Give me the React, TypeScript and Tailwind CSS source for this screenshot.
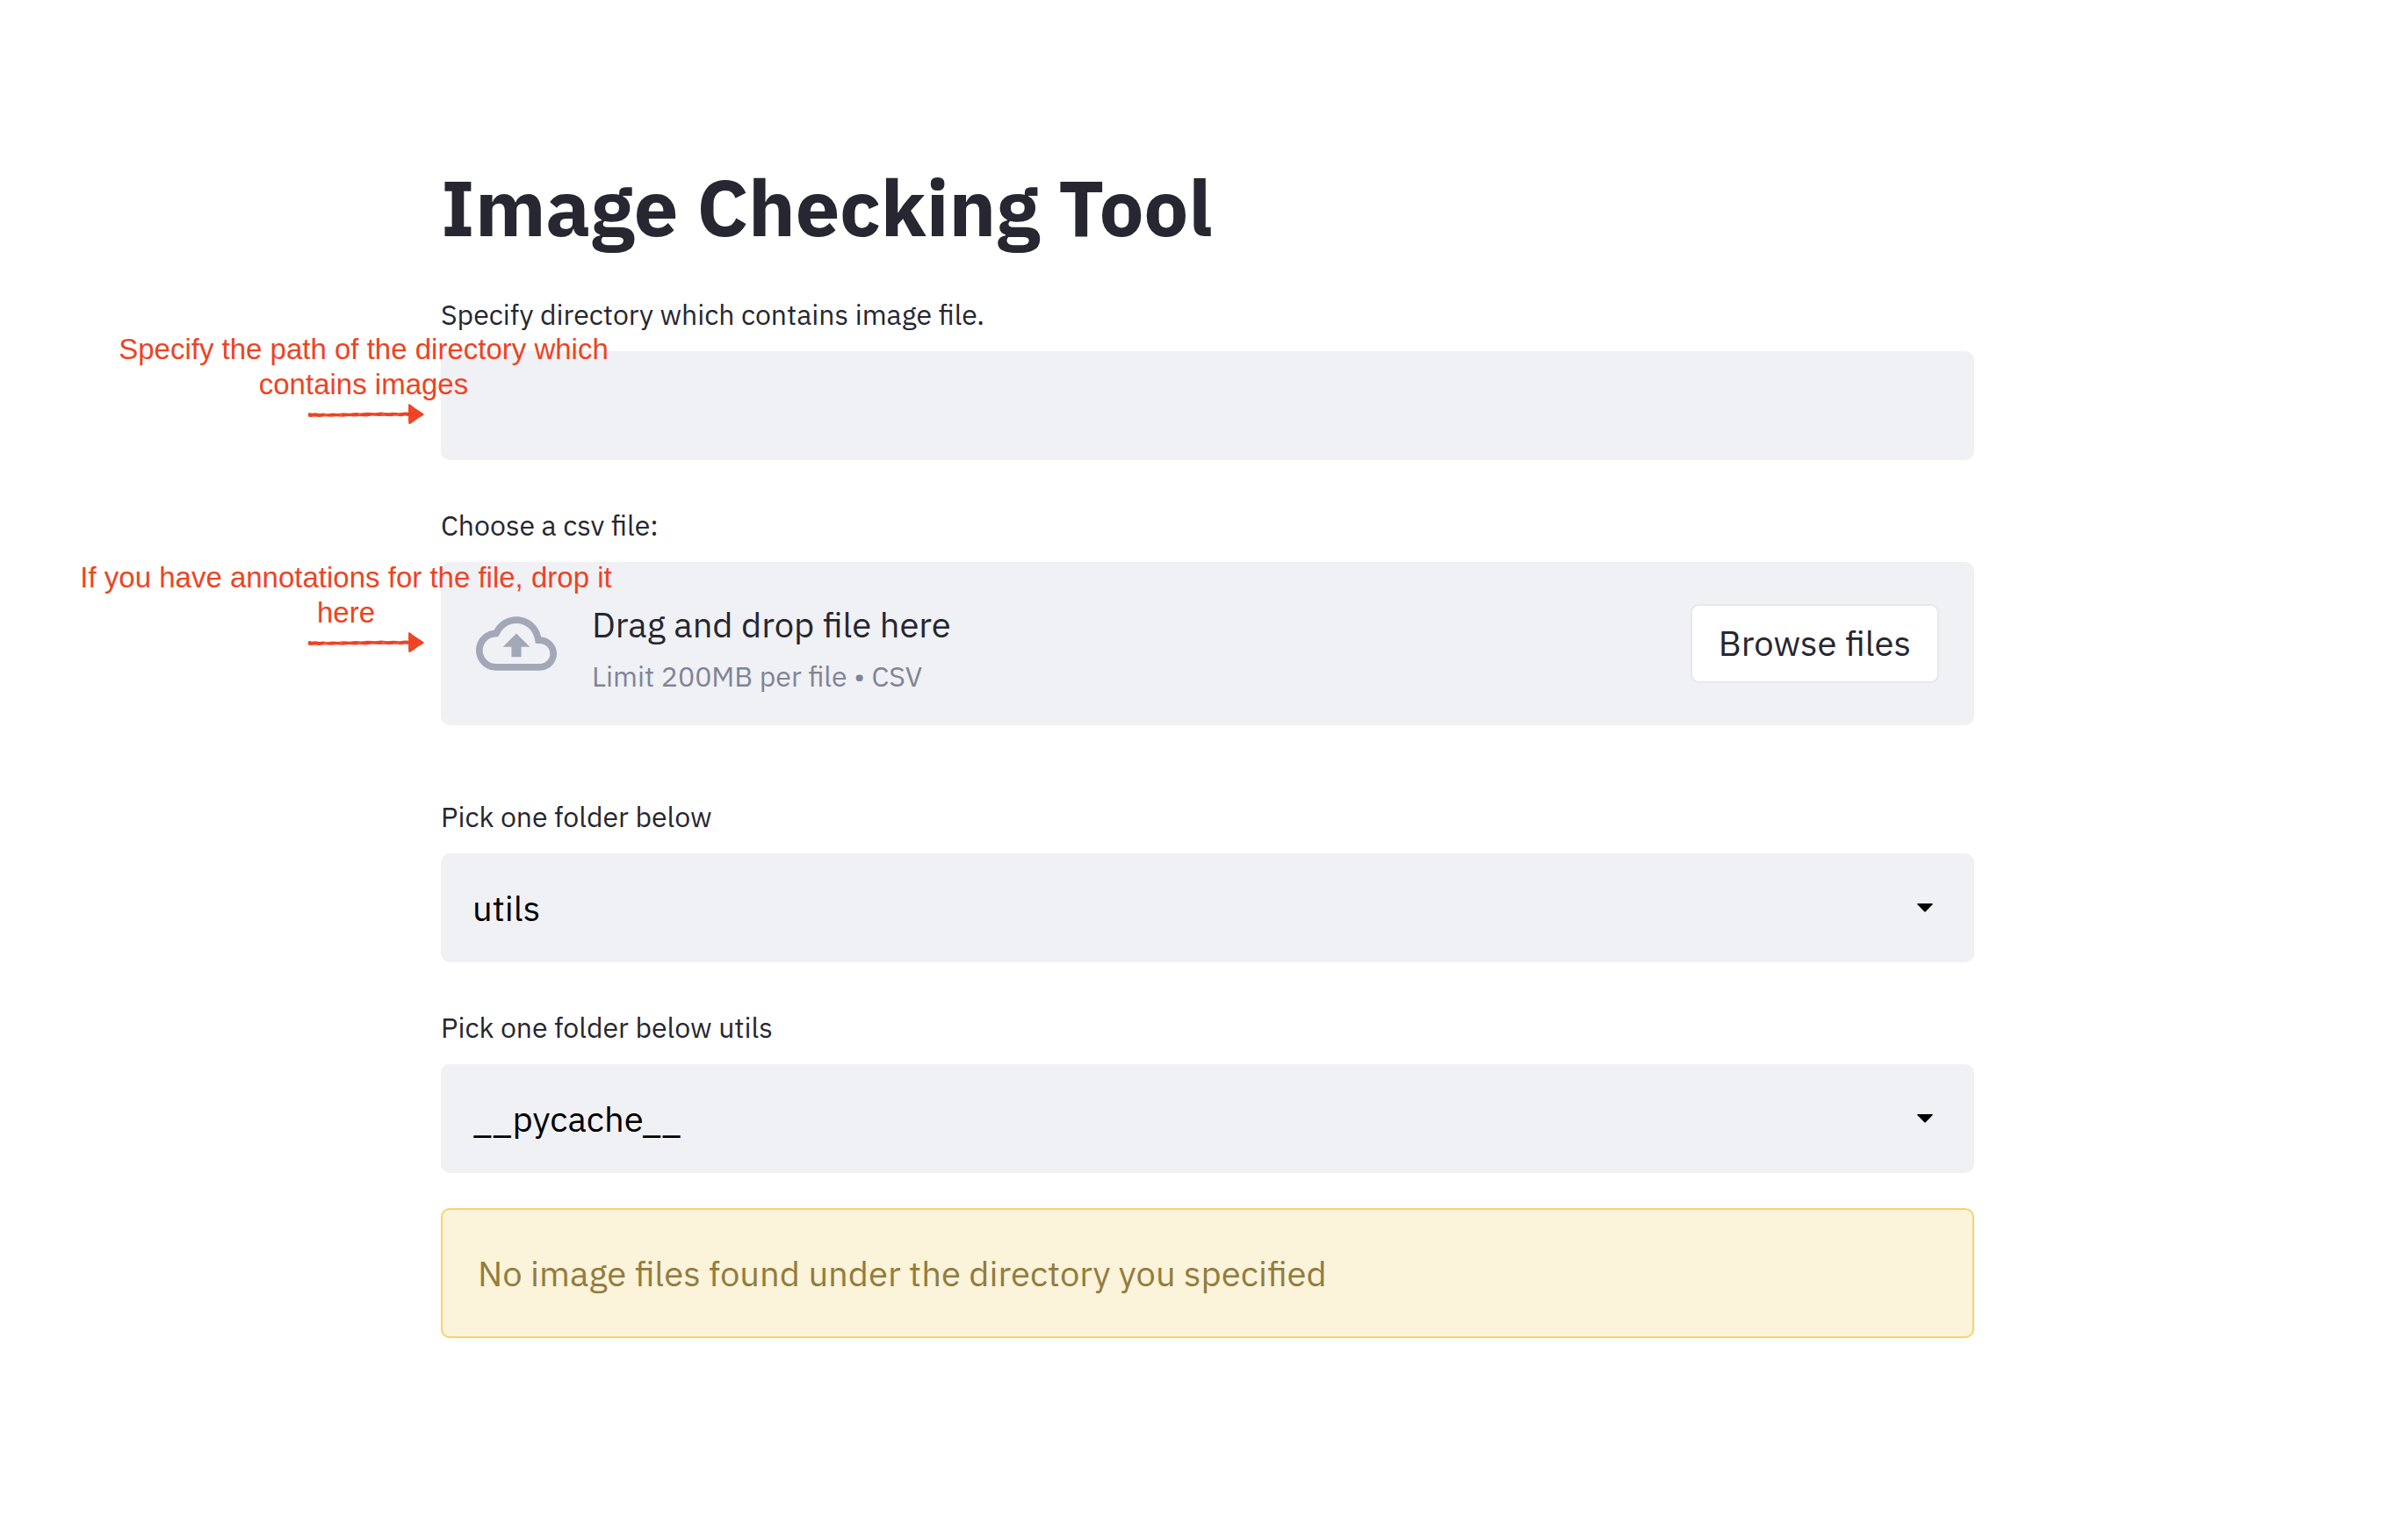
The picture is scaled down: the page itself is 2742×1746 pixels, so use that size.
import { useRef, useState, type ReactNode } from "react";

function Arrow({ className }: { className: string }) {
  return (
    <svg viewBox="0 0 132 24" className={`h-6 w-[132px] ${className}`} fill="#ee4323" aria-hidden="true">
      <path d="M0 10.4 L2 10 L4 10.8 L8 10.2 L13 11 L17 10.6 L22 11.2 L28 10.4 L34 10.9 L40 10.2 L47 10.7 L54 9.9 L60 10.5 L68 9.8 L76 10.3 L83 9.6 L90 10.2 L97 9.7 L104 10.2 L110 9.6 L115 9.8 L115 14 L110 13.4 L105 14.2 L99 13.6 L93 14.3 L87 13.7 L80 14.1 L73 13.6 L66 14.4 L59 14 L53 14.6 L46 14.1 L39 14.8 L32 14.2 L26 14.8 L19 14.2 L13 15 L7 14.4 L3 15 L0 14.6 Z" />
      <path d="M114.2 0.6 Q114.6 -0.4 115.8 0.5 L121 4.4 L124.5 6.8 L131 11 Q132.4 12 131 13 L125 16.6 L121 19.6 L116.2 22.8 Q114.4 23.6 114.3 22 L114 17 L114.3 12 L114 6 Z" />
      <path
        d="M116.6 4.5 l0.8 1 M118.5 8 l0.8 -0.6 M116.5 17.5 l1 -0.8 M120.5 15.5 l0.8 -0.6 M125 12.8 l1 0.2 M18 12.2 l3 0.3 M36 12.6 l2.4 -0.3 M57 12.2 l2.6 0.2 M84 11.9 l3 -0.2 M101 12 l2.4 0.2"
        stroke="#ffffff"
        strokeOpacity="0.4"
        strokeWidth="0.7"
        fill="none"
      />
    </svg>
  );
}

function Note({ className, arrowClass, children }: { className: string; arrowClass: string; children: ReactNode }) {
  return (
    <div
      className={`pointer-events-none absolute flex flex-col items-center text-center font-['Liberation_Sans',Arial,sans-serif] text-[33px] leading-10 text-[#ee4323] ${className}`}
    >
      <p>{children}</p>
      <Arrow className={arrowClass} />
    </div>
  );
}

function Label({ htmlFor, children }: { htmlFor: string; children: ReactNode }) {
  return (
    <label htmlFor={htmlFor} className="text-[32px] leading-[52px]">
      {children}
    </label>
  );
}

function Picker({ id, label, options }: { id: string; label: string; options: string[] }) {
  return (
    <div className="flex flex-col gap-4">
      <Label htmlFor={id}>{label}</Label>
      <div className="grid items-center">
        <select
          id={id}
          className="col-start-1 row-start-1 h-[124px] w-full appearance-none rounded-[10px] bg-[#f0f1f5] px-9 text-[40px] text-black"
        >
          {options.map((option) => (
            <option key={option}>{option}</option>
          ))}
        </select>
        <svg
          viewBox="0 0 18 10"
          className="pointer-events-none col-start-1 row-start-1 mr-[47px] h-2.5 w-[18px] justify-self-end"
          aria-hidden="true"
        >
          <path d="M0.8 0 H17.2 Q18.4 0.3 17.5 1.3 L10 9 Q9 10 8 9 L0.5 1.3 Q-0.4 0.3 0.8 0 Z" fill="#000000" />
        </svg>
      </div>
    </div>
  );
}

export default function App() {
  const fileInput = useRef<HTMLInputElement>(null);
  const [directory, setDirectory] = useState("");

  return (
    <div className="min-h-screen bg-white pl-2 font-['IBM_Plex_Sans',Roboto,sans-serif] text-[#262730]">
      <main className="mx-auto flex max-w-[1746px] flex-col pt-[182px] pb-20">
        <h1 className="text-[90px] leading-[108px] font-bold">Image Checking Tool</h1>

        <div className="mt-[42px] flex flex-col gap-4">
          <Label htmlFor="directory">Specify directory which contains image file.</Label>
          <div className="relative">
            <input
              id="directory"
              type="text"
              value={directory}
              onChange={(event) => setDirectory(event.target.value)}
              className="block h-[124px] w-full rounded-[10px] bg-[#f0f1f5] px-9 text-[40px] text-black"
            />
            <Note className="top-[-22px] left-[-378px] w-[580px]" arrowClass="mt-0.5 ml-1.5">
              Specify the path of the directory which contains images
            </Note>
          </div>
        </div>

        <div className="mt-12 flex flex-col gap-4">
          <Label htmlFor="csv">Choose a csv file:</Label>
          <section className="relative flex items-center gap-10 rounded-[10px] bg-[#f0f1f5] px-10 py-[34px]">
            <svg viewBox="0 0 24 24" className="size-[92px] shrink-0" fill="#a3a8b8" aria-hidden="true">
              <path d="M19.35 10.04C18.67 6.59 15.64 4 12 4 9.11 4 6.6 5.64 5.35 8.04 2.34 8.36 0 10.91 0 14c0 3.31 2.69 6 6 6h13c2.76 0 5-2.24 5-5 0-2.64-2.05-4.78-4.65-4.96zM19 18H6c-2.21 0-4-1.79-4-4 0-2.05 1.53-3.76 3.56-3.97l1.07-.11.5-.95C8.08 7.14 9.94 6 12 6c2.62 0 4.88 1.86 5.39 4.43l.3 1.5 1.53.11c1.56.1 2.78 1.41 2.78 2.96 0 1.65-1.35 3-3 3zM8 13h2.55v3h2.9v-3H16l-4-4z" />
            </svg>
            <div className="flex grow flex-col">
              <span className="text-[40px] leading-[74px]">Drag and drop file here</span>
              <span className="text-[32px] leading-[44px] text-[#808495]">Limit 200MB per file • CSV</span>
            </div>
            <input ref={fileInput} id="csv" type="file" accept=".csv" className="hidden" />
            <button
              type="button"
              onClick={() => fileInput.current?.click()}
              className="rounded-[10px] border-2 border-[#e6e8f0] bg-white px-[30px] pt-2.5 pb-3 text-[40px] leading-[64px]"
            >
              Browse files
            </button>
            <Note className="top-[-2px] left-[-418px] w-[620px]" arrowClass="mt-0.5 ml-[46px]">
              If you have annotations for the file, drop it here
            </Note>
          </section>
        </div>

        <div className="mt-[78px] flex flex-col gap-12">
          <Picker id="folder" label="Pick one folder below" options={["utils"]} />
          <Picker id="subfolder" label="Pick one folder below utils" options={["__pycache__"]} />
        </div>

        <div
          role="alert"
          className="mt-10 rounded-[10px] border-2 border-[#f6d36c] bg-[#fcf3db] px-10 py-10 text-[40px] leading-[64px] text-[#927d3c]"
        >
          No image files found under the directory you specified
        </div>
      </main>
    </div>
  );
}
